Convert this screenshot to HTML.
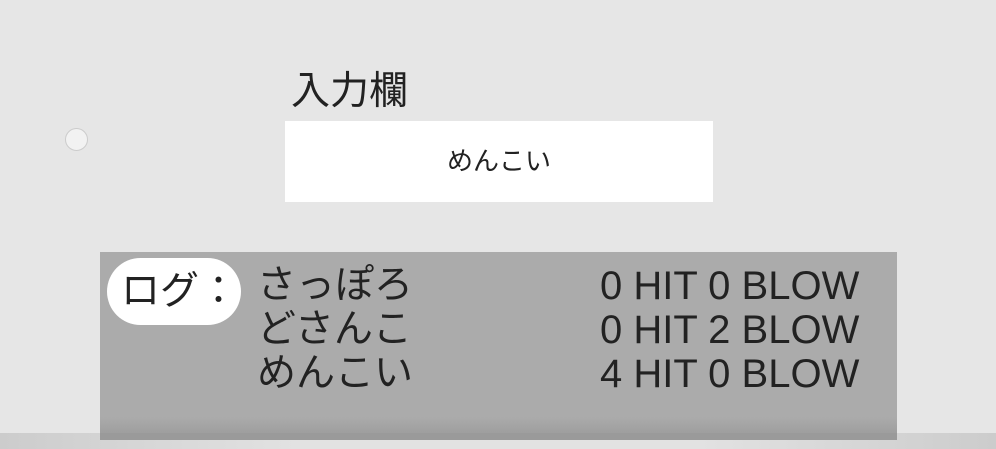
<!DOCTYPE html>
<html><head><meta charset="utf-8"><style>
body{margin:0;width:996px;height:449px;background:#e6e6e6;position:relative;overflow:hidden;font-family:"Liberation Sans","Noto Sans CJK JP",sans-serif;color:#222}
.a{position:absolute}
</style></head><body>
<div class="a" style="left:65px;top:128px;width:21px;height:21px;border-radius:50%;background:#f2f2f2;border:1px solid #ccc"></div>
<div class="a" style="left:291px;top:68px;font-size:39px;line-height:48px">入力欄</div>
<div class="a" style="left:285px;top:121px;width:428px;height:81px;background:#fff;text-align:center;font-size:26px;line-height:81px">めんこい</div>
<div class="a" style="left:100px;top:252px;width:797px;height:188px;background:linear-gradient(#ababab 0,#ababab 165px,#999 188px)"></div>
<div class="a" style="left:0;top:433px;width:996px;height:16px;background:linear-gradient(90deg,#ccc,#e2e2e2 30%,#e2e2e2 70%,#ccc)"></div>
<div class="a" style="left:100px;top:433px;width:797px;height:7px;background:#9a9a9a"></div>
<div class="a" style="left:107px;top:258px;width:134px;height:67px;border-radius:34px;background:#fff"></div>
<div class="a" style="left:121px;top:268px;font-size:39px;line-height:48px">ログ：</div>
<div class="a" style="left:257px;top:264px;font-size:39px;line-height:44px">さっぽろ<br>どさんこ<br>めんこい</div>
<div class="a" style="left:600px;top:264px;font-size:40px;line-height:44px">0 HIT 0 BLOW<br>0 HIT 2 BLOW<br>4 HIT 0 BLOW</div>
</body></html>
